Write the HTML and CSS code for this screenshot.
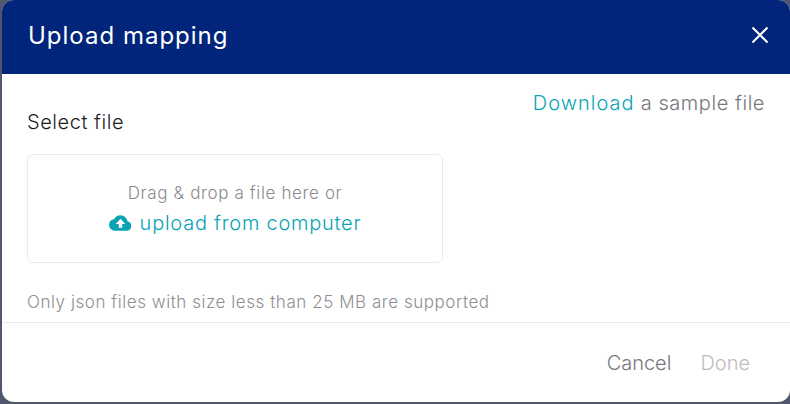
FILE: index.html
```html
<!DOCTYPE html>
<html lang="en">
<head>
<meta charset="utf-8">
<title>Upload mapping</title>
<link rel="stylesheet" href="styles.css">
</head>
<body>
<div class="dialog">
  <header class="dialog-header">
    <h1 class="dialog-title">Upload mapping</h1>
    <button class="close-button" aria-label="Close">
      <svg class="close-icon" viewBox="0 0 18 18" width="18" height="18"><path d="M1.5 1.5 L16.5 16.5 M16.5 1.5 L1.5 16.5" stroke="#fff" stroke-width="2" fill="none"/></svg>
    </button>
  </header>
  <main class="dialog-body">
    <div class="sample-row"><a class="link">Download</a> a sample file</div>
    <div class="field-label">Select file</div>
    <div class="dropzone">
      <div class="drop-text">Drag &amp; drop a file here or</div>
      <div class="upload-row">
        <svg class="cloud-icon" viewBox="0 0 24 16" width="23" height="16"><path fill="#0aa3b4" d="M19.4 6.2A7.5 7.5 0 0 0 12 0a7.5 7.5 0 0 0-6.7 4.1A6 6 0 0 0 0 10a6 6 0 0 0 6 6h13a5 5 0 0 0 .4-9.8z"/><path fill="#fff" d="M12 3.6 17 9h-3.2v4h-3.6V9H7z"/></svg>
        <span class="upload-link">upload from computer</span>
      </div>
    </div>
    <div class="hint">Only json files with size less than 25 MB are supported</div>
  </main>
  <footer class="dialog-footer">
    <span class="btn-cancel">Cancel</span>
    <span class="btn-done">Done</span>
  </footer>
</div>
</body>
</html>
```
FILE: styles.css
```css
html, body { margin: 0; height: 100%; }
body {
  width: 790px;
  height: 404px;
  overflow: hidden;
  background: #50566b;
  font-family: "Inter", "Lato", sans-serif;
}
.dialog {
  margin-left: 2px;
  width: 788px;
  height: 402px;
  background: #fff;
  border-radius: 12px;
  overflow: hidden;
  display: flex;
  flex-direction: column;
}
.dialog-header {
  height: 74px;
  flex: none;
  background: #00257a;
  display: flex;
  align-items: center;
  justify-content: space-between;
  padding: 0 21px 0 26px;
}
.dialog-title {
  margin: 0 0 3px;
  font-size: 24px;
  font-weight: 400;
  color: #fff;
  letter-spacing: 1px;
}
.close-button {
  background: none;
  border: 0;
  padding: 0;
  margin-bottom: 4px;
  display: flex;
}
.dialog-body {
  flex: 1;
  padding: 16px 25px 0 25px;
  display: flex;
  flex-direction: column;
}
.sample-row {
  align-self: flex-end;
  font-size: 20px;
  line-height: 26px;
  color: #78787d;
  font-weight: 300;
  letter-spacing: 0.55px;
}
.link { color: #0aa3b4; letter-spacing: 1px; }
.field-label {
  margin-top: -7px;
  font-size: 20px;
  line-height: 26px;
  color: #1c1c20;
  font-weight: 300;
  letter-spacing: 0.55px;
}
.dropzone {
  margin-top: 19px;
  width: 414px;
  height: 107px;
  border: 1px solid #e9e9ee;
  border-radius: 6px;
  display: flex;
  flex-direction: column;
  align-items: center;
  justify-content: center;
}
.drop-text {
  font-size: 17px;
  line-height: 24px;
  color: #8a8a8e;
  font-weight: 300;
  letter-spacing: 0.63px;
}
.upload-row {
  margin-top: 4px;
  display: flex;
  align-items: center;
  gap: 8px;
}
.upload-link {
  font-size: 20px;
  line-height: 28px;
  color: #0aa3b4;
  font-weight: 300;
  letter-spacing: 0.75px;
}
.hint {
  margin-top: 27px;
  font-size: 17px;
  line-height: 24px;
  color: #8e8e92;
  font-weight: 300;
  letter-spacing: 0.55px;
}
.dialog-footer {
  flex: none;
  height: 80px;
  border-top: 1px solid #e9e9f2;
  display: flex;
  justify-content: flex-end;
  align-items: center;
  gap: 29px;
  padding: 0 40px 0 0;
  box-sizing: border-box;
  font-size: 20px;
  font-weight: 300;
}
.btn-cancel { color: #78787d; }
.btn-done { color: #bcbcbc; }
```
